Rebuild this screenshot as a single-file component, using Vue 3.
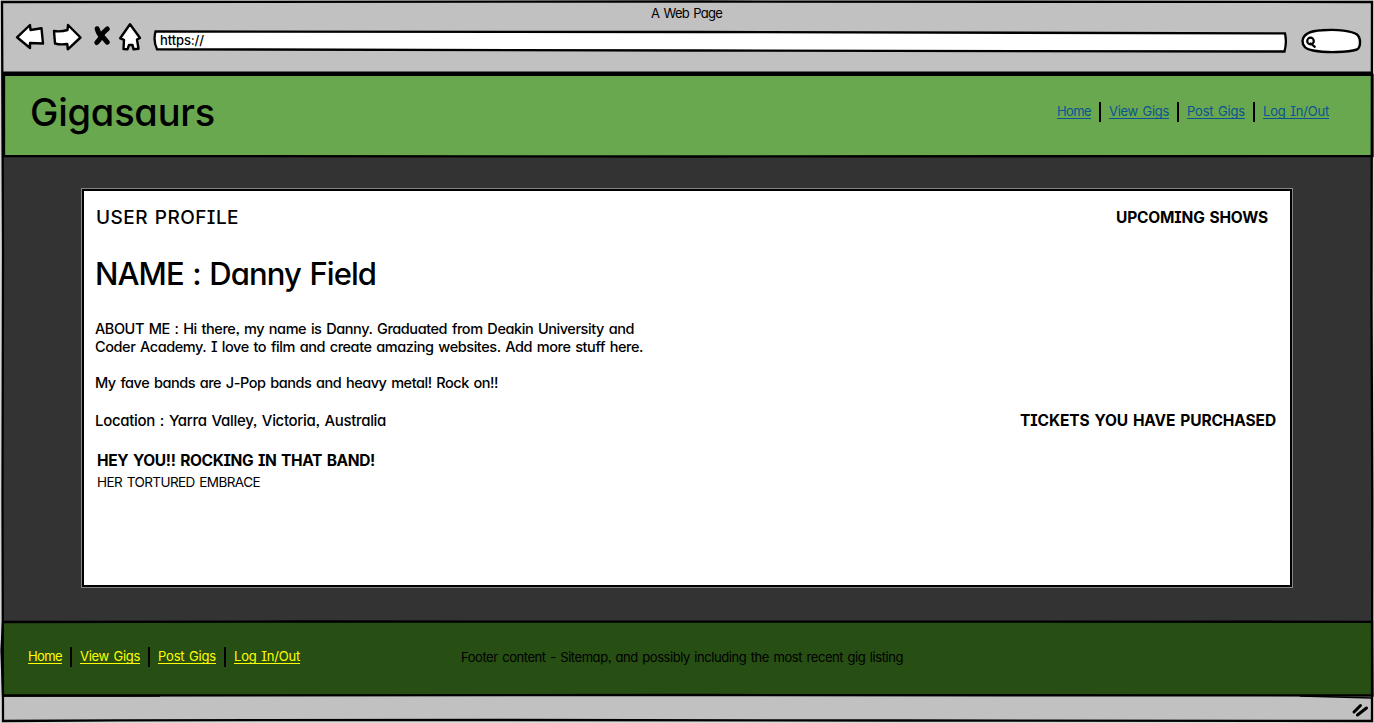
<script setup>
const topLinks = [
  { label: 'Home', width: 34 },
  { label: 'View Gigs', width: 60 },
  { label: 'Post Gigs', width: 58 },
  { label: 'Log In/Out', width: 66 },
]

// Tracks the text out or in so that it fills the given width.
const vFit = {
  mounted(el, { value }) {
    const natural = el.getBoundingClientRect().width
    el.style.letterSpacing = `${(value - natural) / el.textContent.length}px`
  },
}
</script>

<template>
  <div class="window">
    <header class="chrome">
      <div class="window-title"><span v-fit="71">A Web Page</span></div>
      <div class="toolbar">
        <svg class="controls" width="130" height="32" viewBox="14 21 130 32">
          <g fill="#fff" stroke="#000" stroke-width="2.4" stroke-linejoin="round" stroke-linecap="round">
            <path d="M17 37.3 L30 25 L30.5 30 L41.5 28.3 L43 43.5 L30 43 L30 48 Z" />
            <path d="M54 31 Q61 32 67.5 30 L68 25 L80.5 37.5 L67.8 49.3 L67.3 44 Q60 45 55 43.5 Z" />
            <path d="M130 24.200 L140 38 L137 39.500 L138.500 48.800 L133.5 49.3 L132.5 45 L129 45 L127.5 49.3 L123.5 49 L124 39.800 L120.200 38.3 Z" />
          </g>
          <path d="M97.200 28.8 Q98.500 34 101.5 36 Q105 39 107.200 42.2 M107.200 29 Q103 32 101.5 36 Q99.500 40 96.800 42.500" fill="none" stroke="#000" stroke-width="5" stroke-linecap="round" />
        </svg>
        <div class="address">
          <svg class="outline" width="1136" height="24" viewBox="152 29 1136 24">
            <path d="M155.5 31.5 L700 32 L1285 33.4 Q1287 42 1284.5 51.5 L700 50.5 L157 49.3 Q153 41 155.5 31.5 Z" />
          </svg>
          <span v-fit="44" class="url">https://</span>
        </div>
        <svg class="search" width="64" height="28" viewBox="1300 27 64 28">
          <path d="M1302.500 41 C1303 35 1308 31 1322 30.3 C1338 29 1352 31 1357 34.500 C1361 38 1361 47 1357 49.500 C1348 52.5 1326 53 1313 50.5 C1306 49.5 1302.500 46 1302.500 41 Z" fill="#fff" stroke="#000" stroke-width="2.4" />
          <circle cx="1310.500" cy="41" r="3.300" fill="none" stroke="#000" stroke-width="2.200" />
          <path d="M1310.800 43.500 L1314.800 46.800" fill="none" stroke="#000" stroke-width="2.2" stroke-linecap="round" />
        </svg>
      </div>
    </header>

    <div class="banner">
      <h1 v-fit="185" class="brand">Gigasaurs</h1>
      <nav class="links">
        <a v-for="link in topLinks" :key="link.label"><span v-fit="link.width">{{ link.label }}</span></a>
      </nav>
    </div>

    <main class="content">
      <section class="panel">
        <div class="about">
          <h2 class="section-name"><span v-fit="143">USER PROFILE</span></h2>
          <p class="name"><span v-fit="281">NAME : Danny Field</span></p>
          <p class="bio">
            <span v-fit="539">ABOUT ME : Hi there, my name is Danny. Graduated from Deakin University and</span><br />
            <span v-fit="548">Coder Academy. I love to film and create amazing websites. Add more stuff here.</span>
          </p>
          <p class="bio fave"><span v-fit="403">My fave bands are J-Pop bands and heavy metal! Rock on!!</span></p>
          <p class="location"><span v-fit="291">Location : Yarra Valley, Victoria, Australia</span></p>
          <h3 class="shout"><span v-fit="278">HEY YOU!! ROCKING IN THAT BAND!</span></h3>
          <p class="band"><span v-fit="163">HER TORTURED EMBRACE</span></p>
        </div>
        <aside class="lists">
          <h3 class="upcoming"><span v-fit="152">UPCOMING SHOWS</span></h3>
          <h3 class="tickets"><span v-fit="256">TICKETS YOU HAVE PURCHASED</span></h3>
        </aside>
      </section>
    </main>

    <footer class="footer">
      <nav class="links">
        <a v-for="link in topLinks" :key="link.label"><span v-fit="link.width">{{ link.label }}</span></a>
      </nav>
      <p class="footer-note"><span v-fit="442">Footer content - Sitemap, and possibly including the most recent gig listing</span></p>
    </footer>
    <div class="status">
      <svg width="18" height="16" viewBox="1351 702 18 16">
        <path d="M1354 712 L1360.500 705.5 M1357.500 715 L1366.500 708" fill="none" stroke="#000" stroke-width="3" stroke-linecap="round" />
      </svg>
    </div>

    <!-- hand-drawn frame lines -->
    <svg class="frame" width="1374" height="723" viewBox="0 0 1374 723">
      <g fill="none" stroke="#000" stroke-width="2.3">
        <path d="M2 2 L700 1.500 L1372 2 L1371.500 300 L1372.300 500 L1372 721 L900 720.500 L500 720 L120 720.300 L3 721 L2.500 500 L3 250 Z" />
        <path d="M3 72.800 H1372" stroke-width="2.6" />
        <path d="M4 74.800 H1372.500 L1372.500 156 L700 156.500 L4 156 Z" />
        <path d="M3 622 L300 621.500 L1372 621.800 L1372.500 695.500 L700 695 L3 695.500 L1.500 650 Z" />
        <path d="M3 696 H160 M1300 696 L1372 698" stroke-width="1.500" />
      </g>
    </svg>
  </div>
</template>

<style>
body {
  margin: 0;
  background: #d8d8d8;
}
</style>

<style scoped>
.window {
  position: relative;
  box-sizing: border-box;
  width: 1374px;
  height: 723px;
  padding: 1px 2px 2px;
  display: flex;
  flex-direction: column;
  overflow: hidden;
  color: #000;
  font-family: Inter, "Open Sans", sans-serif;
  font-feature-settings: "cv11", "cv08", "ss03";
  font-size: 13px;
  word-spacing: 0.1em;
  white-space: nowrap;
}
h1, h2, h3, p {
  margin: 0;
  font-weight: 500;
}
span {
  display: inline-block;
}
.chrome {
  height: 72px;
  background: #c1c1c1;
}
.window-title {
  height: 20px;
  padding: 3px 1px 0 0;
  line-height: 18px;
  text-align: center;
}
.toolbar {
  display: flex;
  padding-left: 12px;
}
.controls {
  margin-top: -3px;
}
.address {
  position: relative;
  width: 1136px;
  height: 24px;
  margin: 5px 12px 0 8px;
}
.outline {
  display: block;
  fill: #fff;
  stroke: #000;
  stroke-width: 2.3px;
}
.url {
  position: absolute;
  left: 8px;
  top: 2px;
  line-height: 19px;
  font-weight: 500;
}
.search {
  margin-top: 3px;
}
.banner {
  box-sizing: border-box;
  height: 84px;
  padding: 0 43px 7px 28px;
  display: flex;
  align-items: center;
  justify-content: space-between;
  background: #6aa84f;
}
.brand {
  font-size: 38px;
  line-height: 48px;
  font-weight: 500;
}
.links {
  display: flex;
  color: #0b5394;
}
.links a {
  display: flex;
  align-items: center;
  height: 20px;
}
.links a + a::before {
  content: "";
  width: 2px;
  height: 20px;
  margin: 0 8px;
  background: #000;
}
.links span {
  line-height: 14px;
  border-bottom: 1px solid currentColor;
  margin-top: -1px;
}
.content {
  height: 464px;
  box-sizing: border-box;
  padding: 32px 80px 0;
  background: #333;
}
.panel {
  box-sizing: border-box;
  width: 1210px;
  height: 398px;
  display: flex;
  justify-content: space-between;
  padding: 15px 14px 0 11px;
  background: #fff;
  border: 2px solid #000;
  outline: 1px solid #858585;
}
.section-name {
  padding-left: 1px;
  font-size: 19px;
  line-height: 24px;
}
.name {
  margin-top: 24px;
  font-size: 31px;
  line-height: 40px;
}
.bio {
  margin-top: 26px;
  font-size: 14.5px;
  line-height: 18px;
}
.bio.fave {
  margin-top: 18px;
}
.location {
  margin-top: 19px;
  font-size: 15px;
  line-height: 20px;
}
.shout {
  margin-top: 20px;
  padding-left: 2px;
  font-size: 15.5px;
  line-height: 20px;
  font-weight: 700;
}
.band {
  margin-top: 1px;
  padding-left: 2px;
  font-size: 13.5px;
  line-height: 20px;
  font-weight: 400;
}
.lists {
  display: flex;
  flex-direction: column;
  align-items: flex-end;
}
.lists h3 {
  font-size: 15.5px;
  line-height: 24px;
  font-weight: 700;
}
.upcoming {
  margin-right: 8px;
}
.lists .tickets {
  margin-top: 179px;
}
.footer {
  display: flex;
  align-items: center;
  box-sizing: border-box;
  height: 75px;
  padding: 0 26px 4px;
  background: #274e13;
}
.footer .links {
  color: #ff0;
}
.footer-note {
  margin-left: 161px;
  line-height: 20px;
  font-weight: 400;
}
.status {
  display: flex;
  justify-content: flex-end;
  height: 25px;
  padding: 6px 3px 0 0;
  box-sizing: border-box;
  background: #c1c1c1;
}
.frame {
  position: absolute;
  inset: 0;
  pointer-events: none;
}
</style>
